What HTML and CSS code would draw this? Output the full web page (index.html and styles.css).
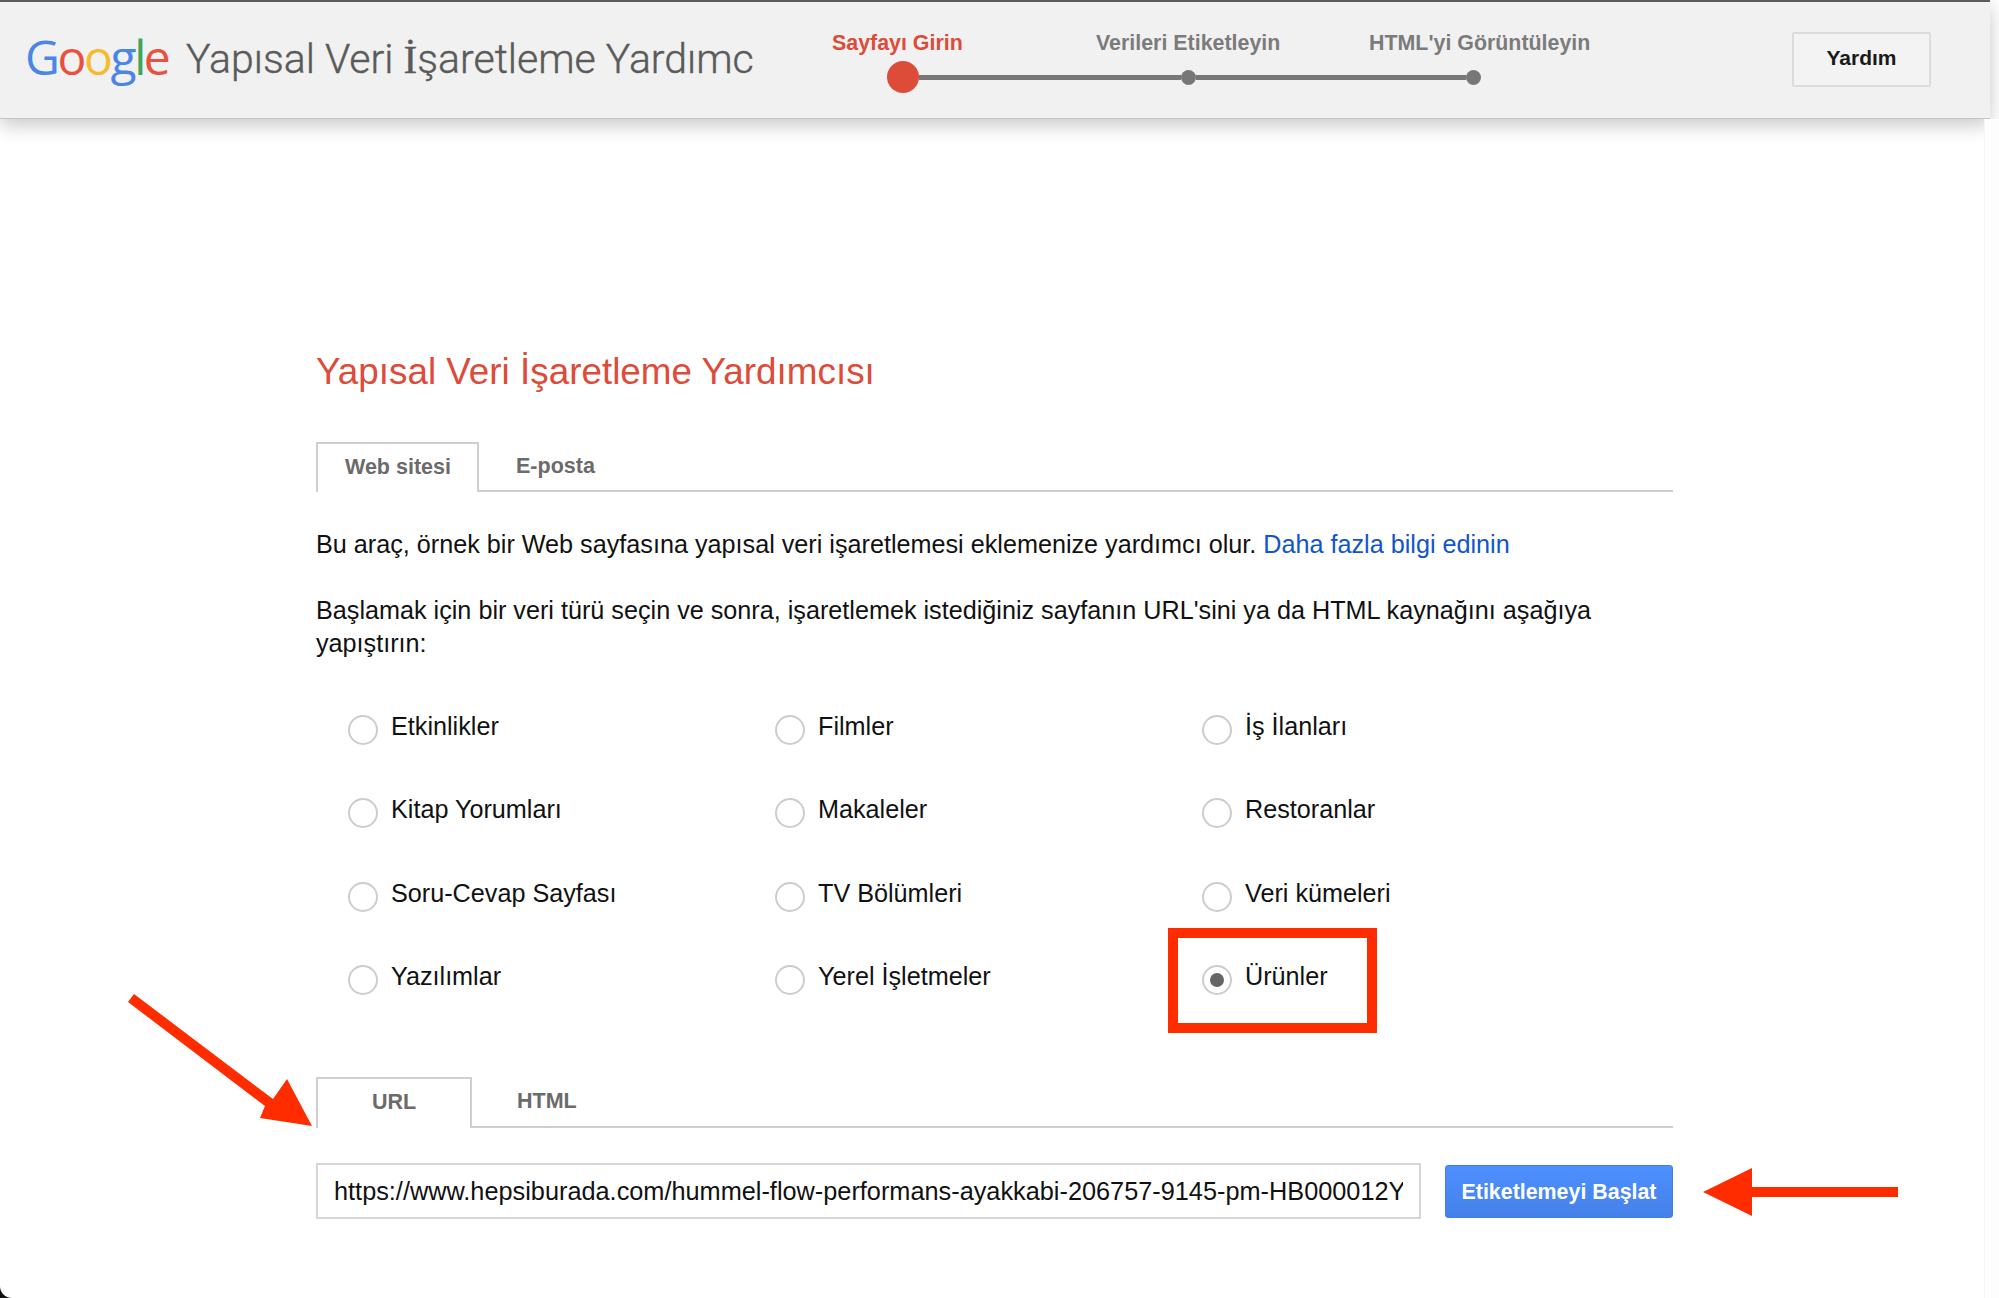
FILE: index.html
```html
<!DOCTYPE html>
<html lang="tr">
<head>
<meta charset="utf-8">
<title>Yapısal Veri İşaretleme Yardımcısı</title>
<link rel="stylesheet" href="styles.css">
</head>
<body>
<header class="topbar">
  <div class="logo"><span class="g-blue">G</span><span class="g-red">o</span><span class="g-yellow">o</span><span class="g-blue">g</span><span class="g-green">l</span><span class="g-red">e</span></div>
  <div class="apptitle">Yapısal Veri <span class="serif-i">İ</span>şaretleme Yardımc</div>
  <div class="stepper">
    <div class="step-labels">
      <span class="step-label step-active">Sayfayı Girin</span>
      <span class="step-label step-second">Verileri Etiketleyin</span>
      <span class="step-label step-third">HTML'yi Görüntüleyin</span>
    </div>
    <div class="track">
      <span class="dot dot-active"></span>
      <span class="bar bar-first"></span>
      <span class="dot"></span>
      <span class="bar"></span>
      <span class="dot"></span>
    </div>
  </div>
  <button class="help">Yardım</button>
</header>

<main class="content">
  <h1 class="heading">Yapısal Veri İşaretleme Yardımcısı</h1>
  <nav class="tabs tabs-type">
    <span class="tab tab-on tab-web">Web sitesi</span>
    <span class="tab tab-mail">E-posta</span>
  </nav>
  <p class="intro">Bu araç, örnek bir Web sayfasına yapısal veri işaretlemesi eklemenize yardımcı olur. <a class="link" href="#">Daha fazla bilgi edinin</a></p>
  <p class="lead">Başlamak için bir veri türü seçin ve sonra, işaretlemek istediğiniz sayfanın URL'sini ya da HTML kaynağını aşağıya yapıştırın:</p>
  <div class="types">
    <label class="type"><span class="radio"></span>Etkinlikler</label>
    <label class="type"><span class="radio"></span>Filmler</label>
    <label class="type"><span class="radio"></span>İş İlanları</label>
    <label class="type"><span class="radio"></span>Kitap Yorumları</label>
    <label class="type"><span class="radio"></span>Makaleler</label>
    <label class="type"><span class="radio"></span>Restoranlar</label>
    <label class="type"><span class="radio"></span>Soru-Cevap Sayfası</label>
    <label class="type"><span class="radio"></span>TV Bölümleri</label>
    <label class="type"><span class="radio"></span>Veri kümeleri</label>
    <label class="type"><span class="radio"></span>Yazılımlar</label>
    <label class="type"><span class="radio"></span>Yerel İşletmeler</label>
    <label class="type"><span class="radio radio-on"></span>Ürünler</label>
  </div>
  <nav class="tabs tabs-source">
    <span class="tab tab-on tab-url">URL</span>
    <span class="tab tab-html">HTML</span>
  </nav>
  <div class="urlrow">
    <input class="urlinput" type="text" value="https://www.hepsiburada.com/hummel-flow-performans-ayakkabi-206757-9145-pm-HB000012YTT">
    <button class="start">Etiketlemeyi Başlat</button>
  </div>
</main>

<div class="edge"></div>
<div class="corner"></div>
<div class="redbox"></div>
<svg class="marks" width="1999" height="1298" viewBox="0 0 1999 1298" aria-hidden="true">
  <path fill="#ff2c00" d="M128 1002L134 994L273 1099L287 1079L312 1126L260 1118L265 1106Z"/>
  <path fill="#ff2c00" d="M1703 1192L1752 1168V1187H1898V1197H1752V1216Z"/>
</svg>
</body>
</html>
```
FILE: styles.css
```css
* { box-sizing: border-box; }
html, body { margin: 0; padding: 0; }
body {
  width: 1999px;
  height: 1298px;
  overflow: hidden;
  position: relative;
  background: #fff;
  color: #111;
  font-family: "Liberation Sans", Arial, sans-serif;
}
.topbar {
  width: 1990px;
  height: 119px;
  background: #f1f1f1;
  border-top: 2px solid #5c5c5c;
  border-bottom: 1px solid #c4c4c4;
  box-shadow: 0 6px 18px rgba(0, 0, 0, 0.22);
  display: flex;
  align-items: flex-start;
  padding-left: 25px;
}
.logo {
  font-family: "Open Sans", sans-serif;
  font-size: 48px;
  line-height: 62px;
  letter-spacing: -2.4px;
  width: 161px;
  margin-top: 24px;
  flex: none;
}
.g-blue { color: #4a86e8; }
.g-red { color: #e8503f; }
.g-yellow { color: #f6bb2a; }
.g-green { color: #3fa757; }
.apptitle {
  font-family: "Roboto", sans-serif;
  font-weight: 300;
  font-size: 41px;
  line-height: 56px;
  color: #5a5a5a;
  width: 646px;
  margin-top: 29px;
  flex: none;
  white-space: nowrap;
  -webkit-text-stroke: 0.4px #5a5a5a;
}
.serif-i { font-family: "Liberation Serif", serif; }
.stepper { width: 960px; flex: none; padding-top: 28px; }
.step-labels { display: flex; font-size: 21.4px; font-weight: 700; line-height: 26px; color: #7b7b7b; white-space: nowrap; }
.step-active { color: #dd4b39; width: 264px; }
.step-second { width: 273px; }
.track { display: flex; align-items: center; margin-left: 55px; margin-top: 5px; height: 32px; }
.bar { width: 270px; height: 5px; background: #777; flex: none; }
.bar-first { width: 262px; }
.dot { width: 15px; height: 15px; border-radius: 50%; background: #777; flex: none; }
.dot-active { width: 32px; height: 32px; background: #dd4b39; }
.help {
  flex: none;
  width: 139px;
  height: 55px;
  margin-top: 30px;
  padding: 0 0 3px;
  background: #f3f3f3;
  border: 2px solid #dcdcdc;
  border-radius: 2px;
  font: 700 21px "Liberation Sans", Arial, sans-serif;
  color: #1a1a1a;
}
.content { width: 1357px; margin-left: 316px; }
.heading {
  margin: 230px 0 0;
  font-size: 36.85px;
  line-height: 46px;
  font-weight: 400;
  color: #dd4b39;
}
.tabs {
  display: flex;
  align-items: flex-start;
  border-bottom: 2px solid #cfcfcf;
  font-size: 21.5px;
  font-weight: 700;
  color: #6b6b6b;
}
.tabs-type { height: 50px; margin-top: 47px; }
.tabs-source { height: 51px; margin-top: 41px; }
.tab { line-height: 48px; display: block; }
.tab-on {
  height: calc(100% + 2px);
  background: #fff;
  border: 2px solid #cfcfcf;
  border-bottom: none;
  line-height: 46px;
}
.tab-web { width: 163px; padding-left: 27px; }
.tab-mail { padding-left: 37px; }
.tab-url { width: 156px; text-align: center; }
.tab-html { padding-left: 45px; }
.intro, .lead { margin: 0; font-size: 25.2px; line-height: 33px; }
.intro { margin-top: 36px; }
.lead { margin-top: 33px; }
.link { color: #1155cc; text-decoration: none; }
.types {
  display: grid;
  grid-template-columns: repeat(3, 427px);
  grid-auto-rows: 83.4px;
  margin-left: 32px;
  margin-top: 42px;
  height: 334px;
}
.type {
  display: flex;
  align-items: flex-start;
  gap: 13px;
  font-size: 25.2px;
  line-height: 30px;
  padding-top: 9px;
}
.radio {
  width: 30px;
  height: 30px;
  margin-top: 4px;
  border: 2px solid #cdcdcd;
  border-radius: 50%;
  background: #fff;
  flex: none;
  display: flex;
  align-items: center;
  justify-content: center;
}
.radio-on::after {
  content: "";
  width: 14px;
  height: 14px;
  border-radius: 50%;
  background: #666;
}
.urlrow { display: flex; justify-content: space-between; align-items: center; margin-top: 35px; height: 56px; }
.urlinput {
  width: 1105px;
  height: 56px;
  border: 2px solid #d6d6d6;
  padding: 0 16px;
  background: #fff;
  color: #111;
  font: 25.3px "Liberation Sans", Arial, sans-serif;
  outline: none;
}
.start {
  width: 228px;
  height: 53px;
  padding: 3px 0 0;
  border: 1px solid #3f7fe0;
  border-radius: 3px;
  background: linear-gradient(#4d90fe, #4580e8);
  color: #fff;
  font: 700 21.4px "Liberation Sans", Arial, sans-serif;
}
.edge { position: absolute; top: 119px; right: 0; bottom: 0; width: 15px; background: #fdfdfd; border-left: 1px solid #f5f5f5; }
.corner {
  position: absolute;
  left: 0;
  bottom: 0;
  width: 12px;
  height: 12px;
  background: radial-gradient(circle at 100% 0, transparent 11.5px, #111 12.5px);
}
.redbox {
  position: absolute;
  left: 1168px;
  top: 928px;
  width: 209px;
  height: 105px;
  border: 10px solid #ff2c00;
}
.marks { position: absolute; left: 0; top: 0; pointer-events: none; }
```
